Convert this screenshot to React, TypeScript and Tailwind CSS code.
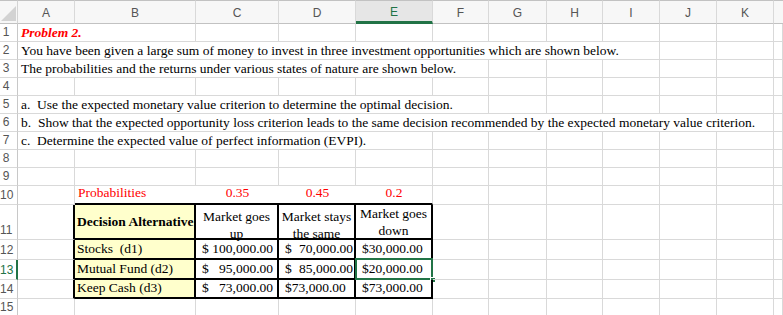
import type { ReactNode } from "react";

const spanClass: Record<number, string> = {
  1: "col-span-1",
  2: "col-span-2",
  5: "col-span-5",
  6: "col-span-6",
  9: "col-span-9",
  11: "col-span-11",
};

const letters = ["A", "B", "C", "D", "E", "F", "G", "H", "I", "J", "K"];

function Cell({
  span = 1,
  className = "",
  children,
}: {
  span?: number;
  className?: string;
  children?: ReactNode;
}) {
  return (
    <div className={`${spanClass[span]} relative overflow-visible whitespace-nowrap ${className}`}>
      {children}
    </div>
  );
}

const grid = "border-r border-b border-[#d9d9d9]";

function RowHead({ n, active = false }: { n: number; active?: boolean }) {
  return (
    <div
      className={`flex items-end justify-start pb-[1px] text-[12px] leading-[15px] border-b border-[#d9d9d9] ${
        active ? "text-[#217346] border-r-2 border-r-[#217346]" : "text-[#555] border-r border-r-[#c8c8c8]"
      }`}
      style={{ fontFamily: '"Liberation Sans", Arial, sans-serif' }}
    >
      <span className="w-[12px] text-center">{n}</span>
    </div>
  );
}

function Empty({ count }: { count: number }) {
  return (
    <>
      {Array.from({ length: count }).map((_, i) => (
        <Cell key={i} className={grid} />
      ))}
    </>
  );
}

function TextRow({ n, span, children, className = "" }: { n: number; span: number; children: ReactNode; className?: string }) {
  return (
    <>
      <RowHead n={n} />
      <Cell span={span} className={`${grid} flex items-end pl-[3px] leading-[16px] ${className}`}>
        {children}
      </Cell>
      <Empty count={12 - span} />
    </>
  );
}

const tbl = "border-r-2 border-b-2 border-black";

export default function App() {
  return (
    <div
      className="w-[783px] h-[315px] overflow-hidden bg-white text-[13.5px] text-black"
      style={{ fontFamily: '"Liberation Serif", "Times New Roman", serif' }}
    >
      <div className="grid grid-cols-[18px_57px_121px_83px_77px_77px_56px_58px_56px_57px_57px_57px_9px] grid-rows-[24px_repeat(9,18px)_19px_35px_20px_20px_19px_18px]">
        {/* column headers */}
        <div className="relative bg-[#f7f7f7] border-t border-t-[#c2c2c2] border-b border-b-[#c2c2c2] border-r border-r-[#d4d4d4]">
          <svg className="absolute left-0 top-0" width="17" height="22" viewBox="0 0 17 22">
            <polygon points="16,5 16,20 1,20" fill="#d3d3d3" />
          </svg>
        </div>
        {letters.map((l) => (
          <div
            key={l}
            className={`flex items-center justify-center pt-[1px] text-[12px] border-t border-t-[#c2c2c2] border-r border-r-[#d9d9d9] ${
              l === "E"
                ? "bg-[#e6e6e6] text-[#217346] border-b-[3px] border-b-[#217346]"
                : "bg-[#f7f7f7] text-[#555] border-b border-b-[#c2c2c2]"
            }`}
            style={{ fontFamily: '"Liberation Sans", Arial, sans-serif' }}
          >
            {l}
          </div>
        ))}
        <div className="bg-[#f7f7f7] border-t border-t-[#c2c2c2] border-b border-b-[#c2c2c2]" />

        <TextRow n={1} span={2} className="font-bold italic text-[#ff0000]">
          Problem 2.
        </TextRow>
        <TextRow n={2} span={9}>
          You have been given a large sum of money to invest in three investment opportunities which are shown below.
        </TextRow>
        <TextRow n={3} span={6}>
          The probabilities and the returns under various states of nature are shown below.
        </TextRow>
        <RowHead n={4} />
        <Empty count={12} />
        <TextRow n={5} span={6}>
          a.&nbsp; Use the expected monetary value criterion to determine the optimal decision.
        </TextRow>
        <TextRow n={6} span={11}>
          b.&nbsp; Show that the expected opportunity loss criterion leads to the same decision recommended by the expected monetary value criterion.
        </TextRow>
        <TextRow n={7} span={5}>
          c.&nbsp; Determine the expected value of perfect information (EVPI).
        </TextRow>
        <RowHead n={8} />
        <Empty count={12} />
        <RowHead n={9} />
        <Empty count={12} />

        {/* row 10: probabilities */}
        <RowHead n={10} />
        <Cell className={grid} />
        <Cell className="border-b-2 border-black flex items-end pl-[3px] text-[#ff0000]">Probabilities</Cell>
        <Cell className="border-b-2 border-black flex items-end justify-center text-[#ff0000]">0.35</Cell>
        <Cell className="border-b-2 border-black flex items-end justify-center text-[#ff0000]">0.45</Cell>
        <Cell className="border-b-2 border-black border-r border-r-[#d9d9d9] flex items-end justify-center text-[#ff0000]">
          0.2
        </Cell>
        <Empty count={7} />

        {/* row 11: table head */}
        <RowHead n={11} />
        <Cell className="border-r-2 border-black border-b border-b-[#d9d9d9]" />
        <Cell className={`${tbl} bg-[#ffffcc] flex items-center pl-[2px] pt-[1px] font-bold`}>Decision Alternative</Cell>
        <Cell className={`${tbl} overflow-hidden text-center leading-[17px] pt-[3px]`}>
          Market goes
          <br />
          up
        </Cell>
        <Cell className={`${tbl} overflow-hidden text-center leading-[17px] pt-[3px]`}>
          Market stays
          <br />
          the same
        </Cell>
        <Cell className={`${tbl} overflow-hidden text-center leading-[17px] pt-0`}>
          Market goes
          <br />
          down
        </Cell>
        <Empty count={7} />

        {/* rows 12-14 */}
        <RowHead n={12} />
        <Cell className="border-r-2 border-black border-b border-b-[#d9d9d9]" />
        <Cell className={`${tbl} bg-[#ffffcc] flex items-center pl-[2px]`}>Stocks&nbsp; (d1)</Cell>
        <Cell className={`${tbl} flex items-center justify-between pl-[6px] pr-[4px]`}>
          <span>$</span>
          <span>100,000.00</span>
        </Cell>
        <Cell className={`${tbl} flex items-center justify-between pl-[6px] pr-[1px]`}>
          <span>$</span>
          <span>70,000.00</span>
        </Cell>
        <Cell className={`${tbl} flex items-center pl-[6px]`}>$30,000.00</Cell>
        <Empty count={7} />

        <RowHead n={13} active />
        <Cell className="border-r-2 border-black border-b border-b-[#d9d9d9]" />
        <Cell className={`${tbl} bg-[#ffffcc] flex items-center pl-[2px]`}>Mutual Fund (d2)</Cell>
        <Cell className={`${tbl} flex items-center justify-between pl-[6px] pr-[4px]`}>
          <span>$</span>
          <span>95,000.00</span>
        </Cell>
        <Cell className={`${tbl} flex items-center justify-between pl-[6px] pr-[1px]`}>
          <span>$</span>
          <span>85,000.00</span>
        </Cell>
        <Cell className={`${tbl} flex items-center pl-[6px]`}>
          $20,000.00
          <div className="absolute left-[-1px] top-[-2px] right-[-2px] bottom-[-2px] border-2 border-[#217346] pointer-events-none" />
          <div className="absolute right-[-5px] bottom-[-5px] w-[6px] h-[6px] bg-[#217346] border border-white" />
        </Cell>
        <Empty count={7} />

        <RowHead n={14} />
        <Cell className="border-r-2 border-black border-b border-b-[#d9d9d9]" />
        <Cell className={`${tbl} bg-[#ffffcc] flex items-center pl-[2px]`}>Keep Cash (d3)</Cell>
        <Cell className={`${tbl} flex items-center justify-between pl-[6px] pr-[4px]`}>
          <span>$</span>
          <span>73,000.00</span>
        </Cell>
        <Cell className={`${tbl} flex items-center pl-[6px]`}>$73,000.00</Cell>
        <Cell className={`${tbl} flex items-center pl-[6px]`}>$73,000.00</Cell>
        <Empty count={7} />

        <RowHead n={15} />
        <Empty count={12} />
      </div>
    </div>
  );
}
